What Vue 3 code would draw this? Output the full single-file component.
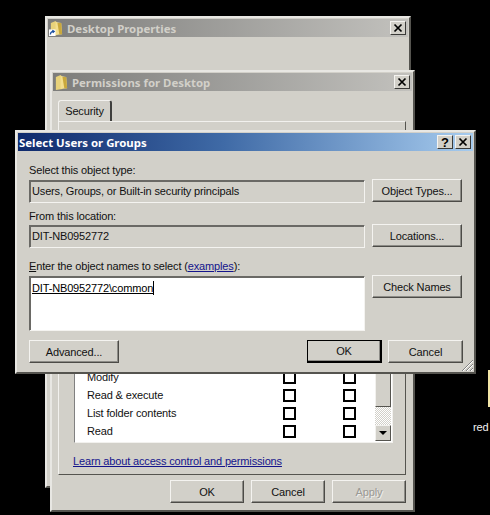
<script setup>
const perms = ['Modify', 'Read & execute', 'List folder contents', 'Read']
</script>

<template>
  <div class="desk">
    <!-- back window -->
    <div class="win props">
      <div class="title inactive">
        <svg class="folder" viewBox="0 0 16 18">
          <path d="M2 3 L7 1 L9 3 L9 16 L2 17 Z" fill="#e8d27a" />
          <path d="M7 2 L13 3 L14 15 L7 16 Z" fill="#f3de8e" />
          <path d="M9 3 L13 3 L14 15 L11 15 Z" fill="#c9a83c" />
          <rect x="0" y="10" width="7" height="7" fill="#fff" />
          <path d="M1.5 15.5 C1.5 13 3 12 5 12 M3.5 11 L5.5 12 L4 13.5" stroke="#1c4fa0" stroke-width="1.4" fill="none" />
        </svg>
        <span class="title-text">Desktop Properties</span>
        <button class="cap"><svg viewBox="0 0 10 10"><path d="M1.5 1.5 L8.5 8.5 M8.5 1.5 L1.5 8.5" /></svg></button>
      </div>
    </div>

    <!-- permissions window -->
    <div class="win perm">
      <div class="title inactive">
        <svg class="folder" viewBox="0 0 16 18">
          <path d="M2 3 L7 1 L9 3 L9 16 L2 17 Z" fill="#e8d27a" />
          <path d="M7 2 L13 3 L14 15 L7 16 Z" fill="#f3de8e" />
          <path d="M9 3 L13 3 L14 15 L11 15 Z" fill="#c9a83c" />
        </svg>
        <span class="title-text">Permissions for Desktop</span>
        <button class="cap"><svg viewBox="0 0 10 10"><path d="M1.5 1.5 L8.5 8.5 M8.5 1.5 L1.5 8.5" /></svg></button>
      </div>
      <div class="tabs"><div class="tab">Security</div></div>
      <div class="pane">
        <div class="list">
          <div class="rows">
            <div v-for="p in perms" :key="p" class="row">
              <span class="row-name">{{ p }}</span>
              <span class="check"></span>
              <span class="check"></span>
            </div>
          </div>
          <div class="scroll">
            <div class="thumb"></div>
            <div class="track"></div>
            <div class="arrow"><i></i></div>
          </div>
        </div>
        <a class="link">Learn about access control and permissions</a>
      </div>
      <div class="perm-btns">
        <button class="btn">OK</button>
        <button class="btn">Cancel</button>
        <button class="btn off">Apply</button>
      </div>
    </div>

    <!-- front dialog -->
    <div class="win dialog">
      <div class="title active">
        <span class="title-text">Select Users or Groups</span>
        <button class="cap help">?</button>
        <button class="cap"><svg viewBox="0 0 10 10"><path d="M1.5 1.5 L8.5 8.5 M8.5 1.5 L1.5 8.5" /></svg></button>
      </div>
      <div class="form">
        <label class="lbl first">Select this object type:</label>
        <div class="field">Users, Groups, or Built-in security principals</div>
        <button class="btn">Object Types...</button>

        <label class="lbl second">From this location:</label>
        <div class="field">DIT-NB0952772</div>
        <button class="btn">Locations...</button>

        <label class="lbl third"><u>E</u>nter the object names to select (<a class="link inline">examples</a>):</label>
        <div class="field names"><span class="typed">DIT-NB0952772\common</span><span class="caret"></span></div>
        <button class="btn top">Check Names</button>
      </div>
      <div class="foot">
        <button class="btn adv">Advanced...</button>
        <div class="foot-right">
          <button class="btn default">OK</button>
          <button class="btn">Cancel</button>
        </div>
      </div>
      <svg class="grip" viewBox="0 0 12 12">
        <path d="M1 12 L12 1 M5 12 L12 5 M9 12 L12 9" stroke="#808080" stroke-width="1" />
        <path d="M2 12 L12 2 M6 12 L12 6 M10 12 L12 10" stroke="#fff" stroke-width="1" />
      </svg>
    </div>

    <span class="red">red</span>
    <div class="sliver"></div>
  </div>
</template>

<style>
html, body {
  margin: 0;
  background: #000;
}
</style>

<style scoped>
.desk {
  position: relative;
  width: 490px;
  height: 515px;
  overflow: hidden;
  background: #000;
  font-family: "Liberation Sans", Arial, sans-serif;
  font-size: 11px;
  letter-spacing: -0.15px;
  color: #111;
}
.win {
  position: absolute;
  box-sizing: border-box;
  background: #d2d0c9;
  border: 2px solid;
  border-color: #e8e7e3 #55544f #55544f #e8e7e3;
  padding: 1px;
  display: flex;
  flex-direction: column;
}
.props { left: 45px; top: 16px; width: 366px; height: 472px; }
.perm { left: 50px; top: 70px; width: 365px; height: 442px; }
.dialog { left: 15px; top: 130px; width: 461px; height: 244px; }

.title {
  height: 18px;
  flex: none;
  display: flex;
  align-items: center;
  gap: 2px;
  padding: 0 2px 0 1px;
}
.inactive { background: linear-gradient(90deg, #7d7d7b, #c2c1bd); color: #d2d0c9; }
.active { background: linear-gradient(90deg, #0f2a6c, #3f6aa6 45%, #a6cbee); color: #fff; }
.folder { width: 15px; height: 17px; flex: none; margin-right: 1px; }
.title-text {
  flex: 1;
  font-family: "Noto Sans", sans-serif;
  font-weight: 700;
  font-size: 11.4px;
  letter-spacing: 0;
  white-space: nowrap;
}
.cap {
  width: 16px;
  height: 14px;
  padding: 0;
  display: flex;
  align-items: center;
  justify-content: center;
  background: #d2d0c9;
  border: 1px solid;
  border-color: #f4f3f0 #3a3a38 #3a3a38 #f4f3f0;
  font-family: "Liberation Sans", sans-serif;
  font-weight: 700;
  font-size: 13px;
  line-height: 1;
  color: #000;
}
.cap svg { width: 10px; height: 10px; }
.cap path { stroke: #000; stroke-width: 1.7; fill: none; }

.tabs { padding: 9px 0 0 5px; height: 20px; flex: none; position: relative; z-index: 1; }
.tab {
  box-sizing: border-box;
  width: 54px;
  height: 21px;
  padding-top: 4px;
  text-align: center;
  background: #d2d0c9;
  border: 1px solid;
  border-color: #f2f1ee #3f3f3d transparent #f2f1ee;
  border-width: 1px 2px 0 1px;
  border-radius: 3px 3px 0 0;
}
.pane {
  box-sizing: border-box;
  margin: 1px 6px 0 5px;
  height: 354px;
  flex: none;
  border: 1px solid;
  border-color: #f2f1ee #55544f #55544f #f2f1ee;
  padding: 0 12px 5px 15px;
  display: flex;
  flex-direction: column;
  justify-content: flex-end;
}
.list {
  box-sizing: border-box;
  display: flex;
  background: #fff;
  border: 1px solid;
  border-color: #808080 #f2f1ee #f2f1ee #808080;
  padding: 0 1px 1px 0;
}
.rows { flex: 1; min-width: 0; padding-bottom: 1px; }
.row {
  height: 18px;
  display: flex;
  align-items: center;
  padding-left: 12px;
}
.row-name { width: 196px; }
.check {
  box-sizing: border-box;
  width: 13px;
  height: 13px;
  border: 2px solid #000;
  margin-right: 47px;
}
.check:last-child { margin-right: 0; }
.scroll {
  width: 16px;
  display: flex;
  flex-direction: column;
  flex: none;
}
.thumb {
  flex: 1;
  background: #d2d0c9;
  border: 1px solid;
  border-color: #f2f1ee #55544f #55544f #f2f1ee;
}
.track {
  height: 18px;
  background: repeating-conic-gradient(#d2d0c9 0 25%, #fff 0 50%) 0 0 / 2px 2px;
}
.arrow {
  box-sizing: border-box;
  height: 16px;
  display: flex;
  align-items: center;
  justify-content: center;
  background: #d2d0c9;
  border: 1px solid;
  border-color: #f2f1ee #55544f #55544f #f2f1ee;
}
.arrow i {
  width: 0;
  height: 0;
  border-style: solid;
  border-width: 4px 4px 0;
  border-color: #000 transparent transparent;
}
.link {
  color: #14148c;
  text-decoration: underline;
  white-space: nowrap;
}
.pane > .link { margin: 11px 0 0 -1px; line-height: 15px; height: 15px; }
.perm-btns {
  display: flex;
  justify-content: flex-end;
  gap: 7px;
  padding: 5px 6px 0 0;
}
.perm-btns .btn { width: 74px; height: 23px; }

.btn {
  box-sizing: border-box;
  height: 23px;
  padding: 0;
  background: #d2d0c9;
  border: 1px solid;
  border-color: #f4f3f0 #4c4b47 #4c4b47 #f4f3f0;
  box-shadow: inset -1px -1px 0 #8d8c87;
  font: inherit;
  letter-spacing: inherit;
  color: #111;
}
.btn.off { color: #9a9994; text-shadow: 1px 1px 0 #f0efeb; }
.btn.default { border: 1px solid #000; border-right-width: 2px; border-bottom-width: 2px; }

.form {
  display: grid;
  grid-template-columns: 336px 90px;
  column-gap: 7px;
  padding: 12px 10px 0 11px;
}
.form .btn { margin-top: -1px; }
.form .btn.top { align-self: start; }
.lbl {
  grid-column: 1 / 3;
  height: 14px;
  line-height: 14px;
  white-space: nowrap;
}
.first { margin-bottom: 3px; }
.second { margin: 6px 0 2px; }
.third { margin: 11px 0 3px; }
.link.inline { color: #14148c; }
.field {
  box-sizing: border-box;
  height: 23px;
  border: 1px solid;
  border-color: #6a6965 #f4f3f0 #f4f3f0 #6a6965;
  box-shadow: inset 1px 1px 0 #6a6965;
  padding: 3px 0 0 2px;
  line-height: 14px;
  white-space: nowrap;
}
.names {
  height: 55px;
  background: #fff;
  padding-top: 4px;
}
.typed { text-decoration: underline; color: #000; }
.caret {
  display: inline-block;
  width: 1px;
  height: 14px;
  background: #000;
  vertical-align: -3px;
}
.foot {
  display: flex;
  justify-content: space-between;
  padding: 9px 10px 0 11px;
}
.adv { width: 90px; }
.foot-right { display: flex; gap: 6px; }
.foot-right .btn { width: 75px; }
.grip {
  position: absolute;
  right: 1px;
  bottom: 1px;
  width: 12px;
  height: 12px;
}
.red {
  position: absolute;
  left: 473px;
  top: 421px;
  color: #f2f2f2;
}
.sliver {
  position: absolute;
  left: 488px;
  top: 370px;
  width: 2px;
  height: 37px;
  background: #f3e6a8;
}
</style>
